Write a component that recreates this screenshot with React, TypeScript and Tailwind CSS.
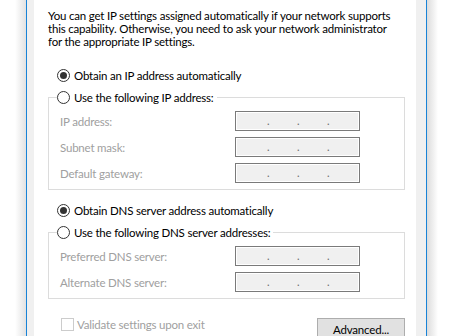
import React from "react";

const font = { fontFamily: "Lato, 'Liberation Sans', sans-serif" };

type RadioProps = { checked?: boolean; label: string };

const Radio = ({ checked, label }: RadioProps) => (
  <span className="flex h-[15px] items-center">
    <span className="flex h-[13px] w-[13px] items-center justify-center rounded-full border border-[#333333] bg-white">
      {checked && <span className="h-[7px] w-[7px] rounded-full bg-[#333333]" />}
    </span>
    <span className="ml-[4px] whitespace-nowrap text-[11.5px] leading-[15px] tracking-[-0.2px] text-black">{label}</span>
  </span>
);

const IpBox = () => (
  <div className="h-[20px] w-[125px] border border-[#7a7a7a] bg-[#f0f0f0] shadow-[inset_0_0_0_1px_#ffffff]">
    <div className="flex pl-[31px] text-[11px] leading-[18px] text-[#6d6d6d]">
      <span className="w-[30px]">.</span>
      <span className="w-[30px]">.</span>
      <span className="w-[30px]">.</span>
    </div>
  </div>
);

const Field = ({ label }: { label: string }) => (
  <div className="flex h-[20px] items-center">
    <span className="w-[175px] text-[11.5px] leading-[15px] tracking-[-0.2px] text-[#a0a0a0]">{label}</span>
    <IpBox />
  </div>
);

const Group = ({ title, fields }: { title: string; fields: string[] }) => (
  <fieldset className="w-[357px] border border-[#dcdcdc] pb-[6px]">
    <legend className="ml-[8px] pr-[3px]">
      <Radio label={title} />
    </legend>
    <div className="flex flex-col gap-[6px] pl-[11px] pt-[6px]">
      {fields.map((f) => (
        <Field key={f} label={f} />
      ))}
    </div>
  </fieldset>
);

export default function App() {
  return (
    <div className="flex h-[336px] w-[474px] overflow-hidden bg-white" style={font}>
      <div className="w-[15px]" />
      <div className="w-[11px] bg-gradient-to-r from-white to-[#e2e2e2]" />
      <div className="w-px bg-[#1883d7]" />
      <div className="w-[7px] bg-[#f0f0f0]" />

      <div className="w-[382px] bg-white pl-[14px] pt-[9px]">
        <p className="whitespace-nowrap text-[11.5px] leading-[13px] tracking-[-0.2px] text-black">
          You can get IP settings assigned automatically if your network supports
          <br />
          this capability. Otherwise, you need to ask your network administrator
          <br />
          for the appropriate IP settings.
        </p>

        <div className="mt-[20px] pl-[9px]">
          <Radio checked label="Obtain an IP address automatically" />
        </div>

        <div className="mt-[7px]">
          <Group title="Use the following IP address:" fields={["IP address:", "Subnet mask:", "Default gateway:"]} />
        </div>

        <div className="mt-[13px] pl-[9px]">
          <Radio checked label="Obtain DNS server address automatically" />
        </div>

        <div className="mt-[7px]">
          <Group title="Use the following DNS server addresses:" fields={["Preferred DNS server:", "Alternate DNS server:"]} />
        </div>

        <div className="mt-[19px] flex w-[357px] items-start justify-between">
          <label className="-mt-[1px] ml-[13px] flex items-center">
            <span className="h-[13px] w-[13px] border border-[#cccccc] bg-white" />
            <span className="ml-[3px] whitespace-nowrap text-[11.5px] leading-[15px] tracking-[-0.2px] text-[#a0a0a0]">
              Validate settings upon exit
            </span>
          </label>
          <button
            type="button"
            className="h-[23px] w-[88px] border border-[#adadad] bg-[#e1e1e1] text-[11.5px] leading-[21px] tracking-[-0.2px] text-black"
          >
            Advanced...
          </button>
        </div>
      </div>

      <div className="w-[10px] bg-[#f0f0f0]" />
      <div className="w-px bg-[#1883d7]" />
      <div className="w-[11px] bg-gradient-to-r from-[#dcdcdc] to-white" />
      <div className="flex-1" />
    </div>
  );
}
